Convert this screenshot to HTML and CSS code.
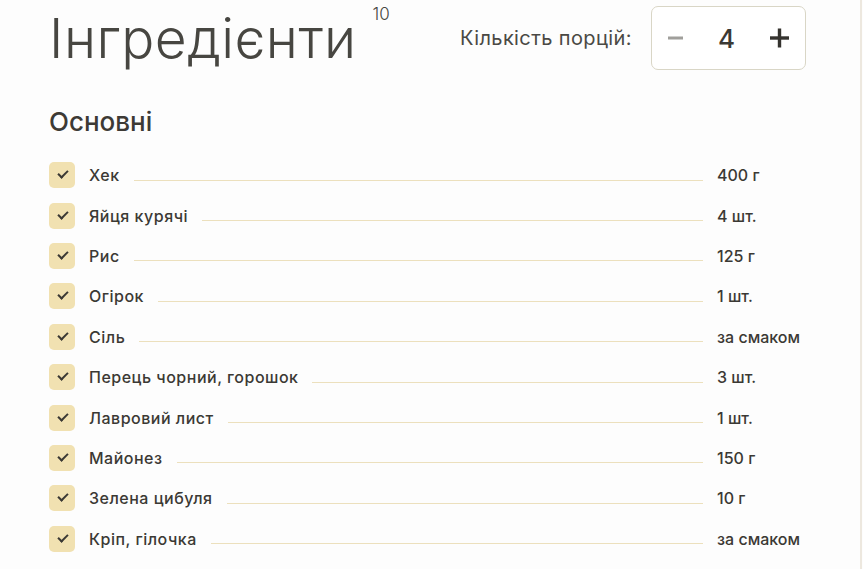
FILE: index.html
```html
<!DOCTYPE html>
<html lang="uk">
<head>
    <meta charset="UTF-8">
    <meta name="viewport" content="width=device-width, initial-scale=1.0">
    <title>Інгредієнти</title>
    <link rel="stylesheet" href="styles.css">
</head>
<body>
    <div class="page">
        <div class="ingredients">
            <div class="head">
                <h1 class="title">Інгредієнти <sup>10</sup></h1>
                <div class="portions">
                    <span class="portions-label">Кількість порцій:</span>
                    <div class="counter">
                        <button class="counter-btn minus" aria-label="Менше">
                            <svg width="15" height="20" viewBox="0 0 15 20"><rect x="0" y="8.5" width="15" height="3" fill="#a09f9b"/></svg>
                        </button>
                        <span class="counter-value">4</span>
                        <button class="counter-btn plus" aria-label="Більше">
                            <svg width="19" height="20" viewBox="0 0 19 20"><rect x="0" y="8.3" width="19" height="3.4" fill="#35332f"/><rect x="7.8" y="0.5" width="3.4" height="19" fill="#35332f"/></svg>
                        </button>
                    </div>
                </div>
            </div>

            <h2 class="group-title">Основні</h2>
            <ul class="list">
                <li><span class="check"></span><span class="name">Хек</span><span class="line"></span><span class="amount">400 г</span></li>
                <li><span class="check"></span><span class="name">Яйця курячі</span><span class="line"></span><span class="amount">4 шт.</span></li>
                <li><span class="check"></span><span class="name">Рис</span><span class="line"></span><span class="amount">125 г</span></li>
                <li><span class="check"></span><span class="name">Огірок</span><span class="line"></span><span class="amount">1 шт.</span></li>
                <li><span class="check"></span><span class="name">Сіль</span><span class="line"></span><span class="amount">за смаком</span></li>
                <li><span class="check"></span><span class="name">Перець чорний, горошок</span><span class="line"></span><span class="amount">3 шт.</span></li>
                <li><span class="check"></span><span class="name">Лавровий лист</span><span class="line"></span><span class="amount">1 шт.</span></li>
                <li><span class="check"></span><span class="name">Майонез</span><span class="line"></span><span class="amount">150 г</span></li>
                <li><span class="check"></span><span class="name">Зелена цибуля</span><span class="line"></span><span class="amount">10 г</span></li>
                <li><span class="check"></span><span class="name">Кріп, гілочка</span><span class="line"></span><span class="amount">за смаком</span></li>
            </ul>
        </div>
    </div>
</body>
</html>
```

FILE: styles.css
```css
body {
    margin: 0;
    font-family: Inter, "Noto Sans", sans-serif;
    background-color: #fdfdfd;
    color: #3b3934;
}

.page {
    width: 860px;
    height: 100vh;
    border-right: 2px solid #ede8df;
    overflow: hidden;
}

.ingredients {
    width: 757px;
    padding-left: 49px;
}

.head {
    display: flex;
    justify-content: space-between;
    align-items: flex-start;
    padding-top: 6px;
}

.title {
    margin: 0;
    font-size: 55px;
    font-weight: 350;
    line-height: 64px;
    color: #474641;
    letter-spacing: 0.5px;
}
.title sup {
    font-size: 17px;
    font-weight: 300;
    vertical-align: top;
    position: relative;
    top: -24px;
    margin-left: 0;
    letter-spacing: 0;
}

.portions {
    display: flex;
    align-items: center;
}

.portions-label {
    font-size: 20px;
    letter-spacing: 0.4px;
    color: #4a4944;
    margin-right: 19px;
}

.counter {
    display: flex;
    align-items: center;
    justify-content: space-between;
    width: 155px;
    height: 64px;
    border: 1px solid #d9d6c6;
    border-radius: 7px;
    padding: 0 16px;
    box-sizing: border-box;
    background: #fff;
}

.counter-btn {
    display: flex;
    border: none;
    background: none;
    padding: 0;
}

.counter-value {
    font-size: 26px;
    font-weight: 500;
    color: #3b3934;
}

.group-title {
    margin: 36px 0 18px 0;
    font-size: 26px;
    font-weight: 500;
    color: #3d3a35;
}

.list {
    list-style: none;
    margin: 0;
    padding: 0;
}

.list li {
    display: flex;
    align-items: center;
    height: 40.4px;
}

.check {
    width: 26px;
    height: 26px;
    border-radius: 5px;
    background-color: #f1e1b1;
    margin-right: 14px;
    flex-shrink: 0;
    position: relative;
}
.check::after {
    content: "";
    position: absolute;
    left: 9px;
    top: 8px;
    width: 8px;
    height: 4px;
    border-left: 2.2px solid #3b3934;
    border-bottom: 2.2px solid #3b3934;
    transform: rotate(-45deg);
}

.name {
    font-size: 16px;
    font-weight: 500;
    letter-spacing: 0.5px;
    white-space: nowrap;
}

.line {
    flex: 1;
    height: 1px;
    background-color: #ece0bd;
    margin: 10px 14px 0 14px;
}

.amount {
    width: 89px;
    font-size: 16px;
    font-weight: 500;
    white-space: nowrap;
}
```
